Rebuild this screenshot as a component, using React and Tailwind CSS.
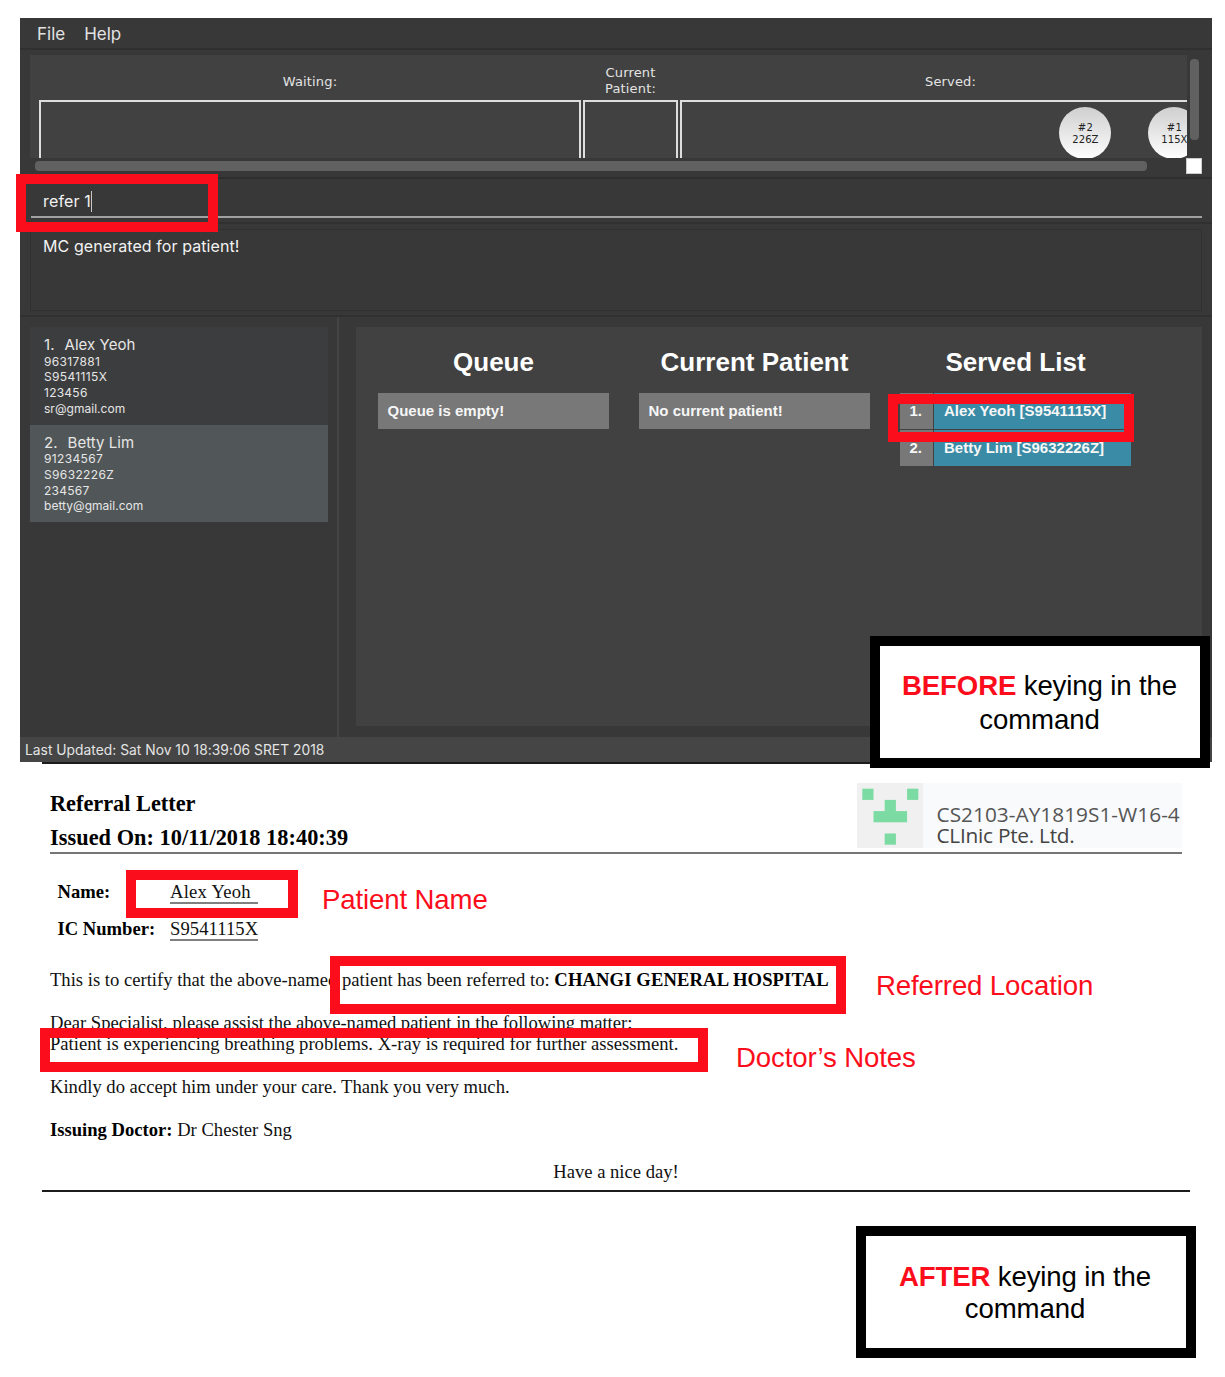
const patients = [
  { index: '1.', name: 'Alex Yeoh', phone: '96317881', ic: 'S9541115X', pin: '123456', email: 'sr@gmail.com' },
  { index: '2.', name: 'Betty Lim', phone: '91234567', ic: 'S9632226Z', pin: '234567', email: 'betty@gmail.com' },
];

function MenuBar() {
  return (
    <div className="flex h-8 shrink-0 items-center gap-[19px] border-b-2 border-[#303030] pt-0.5 pl-[17px] text-[17px] leading-5 text-[#e2e2e2]">
      <span>File</span>
      <span>Help</span>
    </div>
  );
}

function Ticket({ number, code }) {
  return (
    <div className="flex size-[52px] shrink-0 flex-col items-center justify-center rounded-full bg-gradient-to-b from-[#cfcfcf] to-white pt-px text-[10px] leading-3 text-[#222]">
      <span className="tracking-[0.3px]">{number}</span>
      <span className="tracking-[0.1px]">{code}</span>
    </div>
  );
}

function QueueStrip() {
  return (
    <div className="h-[129px] shrink-0 border-b-2 border-[#2e2e2e] pt-[5px] pl-[10px] font-['DejaVu_Sans',sans-serif]">
      <div className="flex">
        <div className="h-[103px] w-[1157px] shrink-0 overflow-hidden bg-[#414141]">
          <div className="flex h-[45px] w-[1200px] gap-0.5 pl-[9px] text-center text-[13px] leading-4 tracking-[0.15px] text-[#e4e4e4]">
            <div className="w-[542px] pt-[19px]">Waiting:</div>
            <div className="w-[95px] px-3 pt-[10px]">Current Patient:</div>
            <div className="w-[541px] pt-[19px]">Served:</div>
          </div>
          <div className="flex h-[90px] w-[1200px] gap-0.5 pl-[9.4px]">
            <div className="w-[542px] border-2 border-[#dcdddc]" />
            <div className="w-[95px] border-2 border-[#dcdddc]" />
            <div className="flex w-[541px] gap-[37px] border-2 border-[#dcdddc] pt-[5px] pl-[377px]">
              <Ticket number="#2" code="226Z" />
              <Ticket number="#1" code="115X" />
            </div>
          </div>
        </div>
        <div className="ml-[3px] h-[81px] w-[9px] translate-y-1 rounded bg-[#616161]" />
      </div>
      <div className="flex">
        <div className="mt-[3px] ml-[5px] h-[10px] w-[1112px] rounded bg-[#616161]" />
        <div className="ml-[39px] size-[16px] border border-[#ccc] bg-white" />
      </div>
    </div>
  );
}

function CommandBox() {
  return (
    <div className="h-[45px] shrink-0 border-b-2 border-[#303030] pl-[11px]">
      <div className="flex h-[39px] w-[1171px] items-center border-b-2 border-[#a0a1a0] pt-[7px] pl-3 text-base text-[#f2f2f2]">
        <span className="leading-5 tracking-[0.15px]">refer 1</span>
        <span className="h-[21px] w-px bg-[#c8c8c8]" />
      </div>
    </div>
  );
}

function ResultBox() {
  return (
    <div className="h-[93px] shrink-0 border-b-2 border-[#303030] pt-[5px] pl-[10px]">
      <div className="h-[82px] w-[1172px] border border-[#303030] pt-[6px] pl-3 text-base leading-5 tracking-[0.08px] text-[#f2f2f2]">
        MC generated for patient!
      </div>
    </div>
  );
}

function PersonCard({ person, tone }) {
  return (
    <div className={`h-[97.5px] pt-[9px] pl-[14px] text-xs leading-[15.8px] text-[#e6e6e6] ${tone}`}>
      <div className="flex h-[17.5px] gap-[10px] text-[15px] leading-[18px] tracking-[0.05px]">
        <span>{person.index}</span>
        <span>{person.name}</span>
      </div>
      <div className="tracking-[0.35px]">{person.phone}</div>
      <div className="tracking-[0.35px]">{person.ic}</div>
      <div className="tracking-[0.25px]">{person.pin}</div>
      <div className="tracking-[0.03px]">{person.email}</div>
    </div>
  );
}

function Column({ title, children }) {
  return (
    <div className="w-[231px]">
      <h2 className="h-[46px] text-center text-[26px] leading-[30px] font-bold text-white">{title}</h2>
      {children}
    </div>
  );
}

function Browser() {
  return (
    <div className="flex h-[399px] w-[846px] gap-[30px] bg-[#414141] pt-5 pl-[22px] font-['Liberation_Sans',sans-serif] text-[15px] leading-9 font-bold text-[#f6f6f6]">
      <Column title="Queue">
        <div className="h-9 bg-[#787878] pl-[9.5px]">Queue is empty!</div>
      </Column>
      <Column title="Current Patient">
        <div className="h-9 bg-[#787878] pl-[9.5px]">No current patient!</div>
      </Column>
      <Column title="Served List">
        <div className="flex flex-col gap-px">
          {patients.map((p) => (
            <div key={p.ic} className="flex h-9 gap-px">
              <div className="w-[33px] bg-[#787878] pl-[9.5px]">{p.index}</div>
              <div className="flex-1 bg-[#3a8ba5] pl-[10px]">{`${p.name} [${p.ic}]`}</div>
            </div>
          ))}
        </div>
      </Column>
    </div>
  );
}

function ClinicWindow() {
  return (
    <div className="flex h-[744px] w-[1192px] flex-col bg-[#383838] font-['Inter',sans-serif]">
      <MenuBar />
      <QueueStrip />
      <CommandBox />
      <ResultBox />
      <div className="flex h-[420px] shrink-0">
        <div className="w-[317px] pt-[10px] pl-[10px]">
          <div className="w-[298px]">
            <PersonCard person={patients[0]} tone="bg-[#3c3d3e]" />
            <PersonCard person={patients[1]} tone="bg-[#515658]" />
          </div>
        </div>
        <div className="w-0.5 bg-[#444]" />
        <div className="pt-[10px] pl-[17px]">
          <Browser />
        </div>
      </div>
      <div className="h-[25px] bg-[#454545] pl-[5px] text-[13.8px] leading-[26px] tracking-[0.02px] text-[#e4e4e4]">
        Last Updated: Sat Nov 10 18:39:06 SRET 2018
      </div>
    </div>
  );
}

function ClinicLogo() {
  return (
    <div className="flex h-[65px] w-[325px] bg-[#f9fafc]">
      <svg width="66" height="65" viewBox="0 0 66 65" className="shrink-0 bg-[#f0f0f0]">
        <g fill="#7bdba3">
          <rect x="5.3" y="5.7" width="11.2" height="11.2" />
          <rect x="50.1" y="5.7" width="11.2" height="11.2" />
          <rect x="27.7" y="16.9" width="11.2" height="11.7" />
          <rect x="16.5" y="28.1" width="33.6" height="11.2" />
          <rect x="27.7" y="50.5" width="11.2" height="11.2" />
        </g>
      </svg>
      <div className="pt-[21px] pl-[13.5px] font-['Open_Sans',sans-serif] text-[20.8px] leading-[20.5px] whitespace-nowrap text-[#555]">
        <div className="tracking-[0.03px]">CS2103-AY1819S1-W16-4</div>
        <div className="tracking-[-0.25px] text-[#444]">CLInic Pte. Ltd.</div>
      </div>
    </div>
  );
}

function ReferralLetter() {
  return (
    <div className="ml-[42px] w-[1148px] border-t-2 border-b-2 border-[#1c1c1c] pl-2 font-['Liberation_Serif',serif] text-[18.62px] leading-[21.33px] text-[#111]">
      <div className="flex h-[90px] w-[1132px] justify-between border-b-2 border-[#757575]">
        <div className="pt-[23px] text-[22.3px] leading-[34.3px] font-bold text-black">
          <div>Referral Letter</div>
          <div className="tracking-[0.05px]">Issued On: 10/11/2018 18:40:39</div>
        </div>
        <div className="pt-[19px]">
          <ClinicLogo />
        </div>
      </div>
      <div className="grid h-[115.4px] grid-cols-[112.5px_88px] content-start gap-y-[14.6px] pt-[26.8px] pl-[7.5px]">
        <div className="font-bold text-black">Name:</div>
        <div className="h-[23px] border-b-2 border-[#808080] tracking-[0.25px]">Alex Yeoh</div>
        <div className="font-bold text-black">IC Number:</div>
        <div className="h-[23px] border-b-2 border-[#808080] tracking-[0.08px]">S9541115X</div>
      </div>
      <p>
        This is to certify that the above-named patient has been referred to:{' '}
        <b className="tracking-[0.12px] text-black">CHANGI GENERAL HOSPITAL</b>
      </p>
      <p className="mt-[21.33px]">
        Dear Specialist, please assist the above-named patient in the following matter:
        <br />
        Patient is experiencing breathing problems. X-ray is required for further assessment.
      </p>
      <p className="mt-[21.33px]">Kindly do accept him under your care. Thank you very much.</p>
      <p className="mt-[21.33px]">
        <b className="text-black">Issuing Doctor:</b> Dr Chester Sng
      </p>
      <p className="mt-[21.33px] mb-[7px] pr-2 text-center">Have a nice day!</p>
    </div>
  );
}

function Callout({ word, className }) {
  return (
    <div className={`absolute flex h-[132px] w-[340px] items-center justify-center border-[10px] border-black bg-white text-center text-black ${className}`}>
      <div className="whitespace-nowrap">
        <b className="text-[#fc0d1b]">{word}</b> keying in the
        <br />
        command
      </div>
    </div>
  );
}

const frames = [
  'left-[16px] top-[174px] h-[58px] w-[202px]',
  'left-[888px] top-[394px] h-[48px] w-[246px]',
  'left-[126px] top-[870px] h-[48px] w-[172px]',
  'left-[330px] top-[956px] h-[58px] w-[516px]',
  'left-[40px] top-[1028px] h-[44px] w-[668px]',
];

const notes = [
  { text: 'Patient Name', place: 'left-[322px] top-[884px]' },
  { text: 'Referred Location', place: 'left-[876px] top-[970px]' },
  { text: 'Doctor’s Notes', place: 'left-[736px] top-[1042px]' },
];

export default function App() {
  return (
    <div className="relative h-[1377px] w-[1225px] overflow-hidden bg-white pt-[18px]">
      <div className="pl-5">
        <ClinicWindow />
      </div>
      <ReferralLetter />
      {frames.map((f) => (
        <div key={f} className={`absolute border-[10px] border-[#fc0d1b] ${f}`} />
      ))}
      <div className="font-['Liberation_Sans',sans-serif] text-[27.6px] tracking-[-0.13px]">
        {notes.map((n) => (
          <div key={n.text} className={`absolute leading-8 whitespace-nowrap text-[#fc0d1b] ${n.place}`}>
            {n.text}
          </div>
        ))}
        <Callout word="BEFORE" className="left-[870px] top-[636px] pt-px pr-px leading-[33.7px]" />
        <Callout word="AFTER" className="left-[856px] top-[1226px] pt-px pr-0.5 leading-8" />
      </div>
    </div>
  );
}
